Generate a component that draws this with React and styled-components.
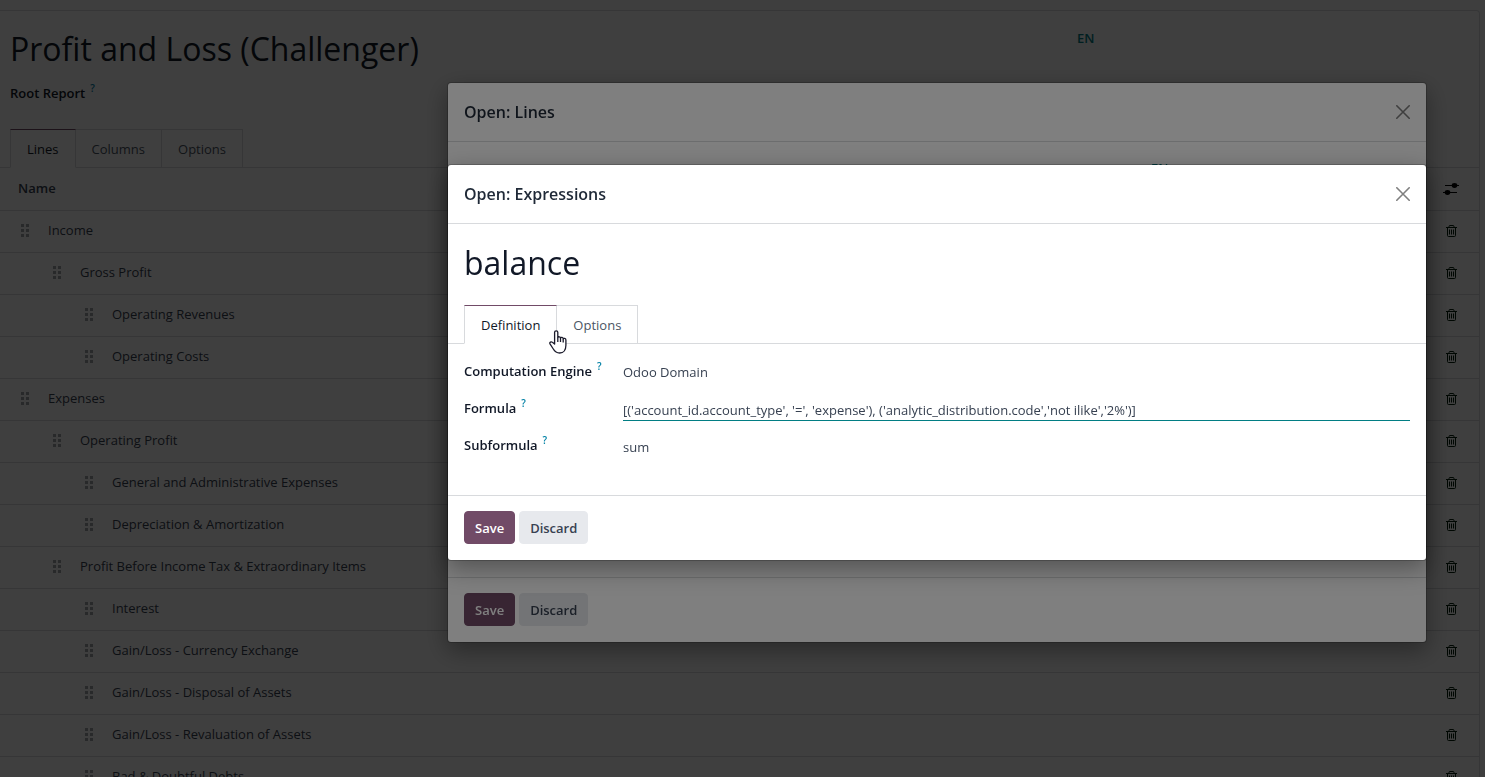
import React, { useState } from 'react';
import styled, { createGlobalStyle, css } from 'styled-components';

const GlobalStyle = createGlobalStyle`
    * {
        box-sizing: border-box;
    }
    body {
        margin: 0;
        overflow: hidden;
        background-color: #f9fafb;
        color: #374151;
        font-family: "Open Sans", "Noto Sans", sans-serif;
        font-size: 13px;
        line-height: 21px;
    }
    button, input, select {
        margin: 0;
        font: inherit;
        color: inherit;
    }
`;

const Page = styled.main`
    height: 100vh;
    padding: 10px 5px 0 0;
    overflow: hidden;
    isolation: isolate;
`;

const Sheet = styled.section`
    border: 1px solid #d8dadd;
    border-left: none;
    border-top-right-radius: 4px;
    background-color: #fff;
`;

const SheetHead = styled.div`
    display: grid;
    grid-template-columns: 1fr 402px;
    padding: 17px 0 0 10px;
`;

const TitleInput = styled.input`
    width: 100%;
    height: 42px;
    padding: 0;
    border: none;
    outline: none;
    background: transparent;
    color: #111827;
    font-size: 32px;
    line-height: 42px;
`;

const LangButton = styled.button`
    justify-self: start;
    align-self: start;
    padding: 0;
    border: none;
    background: transparent;
    color: #017e84;
    font-weight: 600;
    cursor: pointer;
`;

const FieldLabel = styled.label`
    color: #111827;
    font-weight: 600;
`;

const Help = styled.sup`
    margin-left: 5px;
    color: #0180a5;
    font-size: 10px;
    line-height: 0;
    vertical-align: 6px;
`;

const RootField = styled.div`
    padding: 13px 10px 25px;
`;

const TabList = styled.div`
    display: flex;
    height: 39px;
    padding-left: ${({ $indent }) => $indent}px;
    border-bottom: 1px solid #d8dadd;
`;

const Tab = styled.button`
    position: relative;
    height: 39px;
    margin-right: -1px;
    padding: 2px 16px 0;
    border: 1px solid #d8dadd;
    background-color: #fff;
    color: #4b5563;
    cursor: pointer;
    ${({ $active }) => $active && css`
        z-index: 1;
        border-top-color: #714b67;
        border-bottom-color: #fff;
        color: #111827;
    `}
`;

const LinesTable = styled.table`
    width: 100%;
    border-collapse: separate;
    border-spacing: 0;

    th, td {
        height: 42px;
        padding: 0;
        border-bottom: 1px solid #d8dadd;
        text-align: left;
    }
    th {
        height: 43px;
        padding: 0 0 2px 18px;
        font-weight: 600;
    }
    th:last-child, td:last-child {
        width: 36px;
        padding: 0;
    }
    td:last-child {
        padding-bottom: 1px;
    }
`;

const NameCell = styled.div`
    display: flex;
    align-items: center;
    gap: 18px;
    padding-left: ${({ $level }) => 20 + $level * 32}px;
    padding-bottom: 2px;
`;

const IconButton = styled.button`
    display: block;
    padding: 0;
    border: none;
    background: transparent;
    color: ${({ $color }) => $color};
    cursor: pointer;

    svg {
        display: block;
    }
`;

const Backdrop = styled.div`
    position: fixed;
    inset: 0;
    padding: ${({ $top }) => $top}px 58px 0 447px;
    background-color: rgba(0, 0, 0, 0.5);
`;

const Dialog = styled.div`
    border: 1px solid rgba(0, 0, 0, 0.2);
    border-radius: 4px;
    background-color: #fff;
    background-clip: padding-box;
    box-shadow: 0 8px 24px rgba(0, 0, 0, 0.35);
`;

const DialogHeader = styled.header`
    display: flex;
    align-items: center;
    justify-content: space-between;
    height: 59px;
    padding: 0 16px;
    border-bottom: 1px solid #d8dadd;
`;

const DialogTitle = styled.h4`
    margin: 0;
    color: #1f2937;
    font-size: 16px;
    font-weight: 600;
`;

const LinesBody = styled.div`
    display: grid;
    grid-template-columns: 1fr 275px;
    min-height: 435px;
    padding: 16px 0 0 16px;
`;

const ExpressionsBody = styled.div`
    padding-top: 18px;
`;

const NameField = styled.div`
    padding: 0 16px 21px;
`;

const Fields = styled.div`
    display: grid;
    grid-template-columns: 159px 1fr;
    row-gap: 11px;
    padding: 14px 16px 37px;

    ${FieldLabel} {
        padding-top: 3px;
    }
`;

const fieldStyles = css`
    width: 100%;
    height: 26px;
    padding: 4px 0 0;
    border: none;
    border-bottom: 1px solid ${({ $focused }) => ($focused ? '#017e84' : 'transparent')};
    border-radius: 0;
    outline: none;
    background: transparent;
    appearance: none;
`;

const FieldInput = styled.input`
    ${fieldStyles}
`;

const FieldSelect = styled.select`
    ${fieldStyles}
`;

const DialogFooter = styled.footer`
    display: flex;
    gap: 4px;
    padding: 15px 16px 16px;
    border-top: 1px solid #d8dadd;
`;

const Button = styled.button`
    height: 33px;
    padding: 2px 10px 0;
    border: 1px solid ${({ $primary }) => ($primary ? '#714b67' : '#e7e9ed')};
    border-radius: 4px;
    background-color: ${({ $primary }) => ($primary ? '#714b67' : '#e7e9ed')};
    color: ${({ $primary }) => ($primary ? '#fff' : '#374151')};
    font-weight: 600;
    cursor: pointer;
`;

const Pointer = styled.svg`
    position: absolute;
    top: 24px;
    right: -11px;
    z-index: 2;
    pointer-events: none;
`;

const lines = [
    { name: 'Income', level: 0 },
    { name: 'Gross Profit', level: 1 },
    { name: 'Operating Revenues', level: 2 },
    { name: 'Operating Costs', level: 2 },
    { name: 'Expenses', level: 0 },
    { name: 'Operating Profit', level: 1 },
    { name: 'General and Administrative Expenses', level: 2 },
    { name: 'Depreciation & Amortization', level: 2 },
    { name: 'Profit Before Income Tax & Extraordinary Items', level: 1 },
    { name: 'Interest', level: 2 },
    { name: 'Gain/Loss - Currency Exchange', level: 2 },
    { name: 'Gain/Loss - Disposal of Assets', level: 2 },
    { name: 'Gain/Loss - Revaluation of Assets', level: 2 },
    { name: 'Bad & Doubtful Debts', level: 2 },
];

const HandleIcon = () => (
    <svg width="10" height="13" viewBox="0 0 10 13" fill="#a3a6ab" shapeRendering="crispEdges">
        {[0, 5, 10].map(y => (
            <g key={y}>
                <rect x="1" y={y} width="3" height="3" />
                <rect x="6" y={y} width="3" height="3" />
            </g>
        ))}
    </svg>
);

const TrashIcon = () => (
    <svg width="16" height="14" viewBox="0 0 16 14" fill="none" stroke="currentColor">
        <path d="M3 3.500h11M6 3.500v-1q0-1 1-1h3q1 0 1 1v1M4.500 3.500v8q0 1 1 1h6q1 0 1-1v-8M6.500 5.500v5M8.500 5.500v5M10.500 5.500v5" />
    </svg>
);

const SlidersIcon = () => (
    <svg width="16" height="14" viewBox="0 0 16 14" fill="currentColor">
        <path d="M2 3h14v1H2zM0 10h14v1H0z" />
        <ellipse cx="11.5" cy="3.5" rx="2.8" ry="2.4" />
        <ellipse cx="4.5" cy="10.5" rx="2.8" ry="2.4" />
    </svg>
);

const CloseIcon = () => (
    <svg width="14" height="14" viewBox="0 0 14 14" fill="none" stroke="currentColor" strokeWidth="1.6" strokeLinecap="round">
        <path d="M.8.8l12.4 12.4M13.2.8L.8 13.2" />
    </svg>
);

const HandPointer = () => (
    <Pointer width="18" height="24" viewBox="0 0 18 24" fill="#fff" stroke="#1b1b2b" strokeWidth="1.3" strokeLinejoin="round">
        <path d="M5.6 14V2.2C5.6.3 8.8.3 8.8 2.2v5.3c.3-1.1 2.7-1 2.7.5 .4-1 2.7-.8 2.7.8 .4-.8 2.7-.6 2.7 1.2v5.2c0 4.600-2.300 7.800-6.200 7.800-3.600 0-5-1.600-6.400-4L1 13.900c-.8-1.500 1.100-2.700 2.400-1.600z" />
        <path d="M8.800 7.500v4.500M11.500 8v4M14.200 9v3.500" fill="none" />
    </Pointer>
);

const DialogTop = ({ title }) => (
    <DialogHeader>
        <DialogTitle>{title}</DialogTitle>
        <IconButton $color="#7f7f7f" aria-label="Close">
            <CloseIcon />
        </IconButton>
    </DialogHeader>
);

const DialogBottom = () => (
    <DialogFooter>
        <Button $primary>Save</Button>
        <Button>Discard</Button>
    </DialogFooter>
);

const ReportForm = () => (
    <Page>
        <Sheet>
            <SheetHead>
                <TitleInput aria-label="Report name" defaultValue="Profit and Loss (Challenger)" />
                <LangButton>EN</LangButton>
            </SheetHead>
            <RootField>
                <FieldLabel>Root Report<Help>?</Help></FieldLabel>
            </RootField>
            <TabList $indent={10} role="tablist">
                <Tab $active role="tab">Lines</Tab>
                <Tab role="tab">Columns</Tab>
                <Tab role="tab">Options</Tab>
            </TabList>
            <LinesTable>
                <thead>
                    <tr>
                        <th>Name</th>
                        <th>
                            <IconButton $color="#000" aria-label="Optional columns">
                                <SlidersIcon />
                            </IconButton>
                        </th>
                    </tr>
                </thead>
                <tbody>
                    {lines.map(line => (
                        <tr key={line.name}>
                            <td>
                                <NameCell $level={line.level}>
                                    <HandleIcon />
                                    <span>{line.name}</span>
                                </NameCell>
                            </td>
                            <td>
                                <IconButton $color="#001c08" aria-label={`Delete ${line.name}`}>
                                    <TrashIcon />
                                </IconButton>
                            </td>
                        </tr>
                    ))}
                </tbody>
            </LinesTable>
        </Sheet>
    </Page>
);

const LinesDialog = () => (
    <Backdrop $top={82}>
        <Dialog role="dialog" aria-label="Open: Lines">
            <DialogTop title="Open: Lines" />
            <LinesBody>
                <span />
                <LangButton>EN</LangButton>
            </LinesBody>
            <DialogBottom />
        </Dialog>
    </Backdrop>
);

const ExpressionsDialog = () => {
    const [formula, setFormula] = useState("[('account_id.account_type', '=', 'expense'), ('analytic_distribution.code','not ilike','2%')]");
    return (
        <Backdrop $top={164}>
            <Dialog role="dialog" aria-label="Open: Expressions">
                <DialogTop title="Open: Expressions" />
                <ExpressionsBody>
                    <NameField>
                        <TitleInput aria-label="Label" defaultValue="balance" />
                    </NameField>
                    <TabList $indent={16} role="tablist">
                        <Tab $active role="tab">
                            Definition
                            <HandPointer />
                        </Tab>
                        <Tab role="tab">Options</Tab>
                    </TabList>
                    <Fields>
                        <FieldLabel htmlFor="engine">Computation Engine<Help>?</Help></FieldLabel>
                        <FieldSelect id="engine">
                            <option>Odoo Domain</option>
                        </FieldSelect>
                        <FieldLabel htmlFor="formula">Formula<Help>?</Help></FieldLabel>
                        <FieldInput id="formula" $focused value={formula} onChange={e => setFormula(e.target.value)} />
                        <FieldLabel htmlFor="subformula">Subformula<Help>?</Help></FieldLabel>
                        <FieldInput id="subformula" defaultValue="sum" />
                    </Fields>
                </ExpressionsBody>
                <DialogBottom />
            </Dialog>
        </Backdrop>
    );
};

export default function App() {
    return (
        <>
            <GlobalStyle />
            <ReportForm />
            <LinesDialog />
            <ExpressionsDialog />
        </>
    );
}
